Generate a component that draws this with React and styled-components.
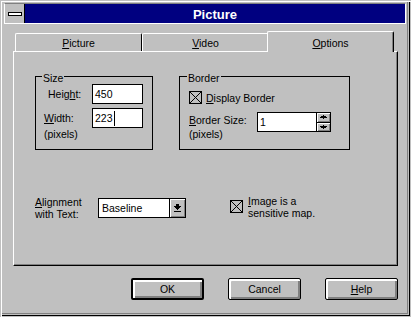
import React from 'react';
import styled, { createGlobalStyle } from 'styled-components';

const Global = createGlobalStyle`
  html, body { margin: 0; padding: 0; background: #c0c0c0; }
  body {
    font-family: "Liberation Sans", Arial, sans-serif;
    font-size: 10.5px;
    color: #000;
  }
  * { box-sizing: border-box; }
`;

const Window = styled.div`
  width: 411px;
  height: 317px;
  background: #c0c0c0;
  display: flex;
  flex-direction: column;
  box-shadow:
    inset 1px 1px 0 #c0c0c0,
    inset 2px 2px 0 #fff,
    inset -1px -1px 0 #c0c0c0,
    inset -2px -2px 0 #000,
    inset -3px -3px 0 #c0c0c0,
    inset -4px -4px 0 #808080;
`;

const TitleBar = styled.div`
  margin: 3px 5px 0 4px;
  height: 21px;
  display: flex;
  border: 1px solid #fff;
  border-top-color: #808080;
`;

const SysBox = styled.div`
  width: 20px;
  border-right: 1px solid #000;
  background: #c0c0c0;
  padding: 8px 0 0 3px;
`;

const SysDash = styled.div`
  width: 14px;
  height: 4px;
  border: 1px solid #000;
  background: #fff;
`;

const Caption = styled.div`
  flex: 1;
  background: #000080;
  color: #fff;
  font-weight: bold;
  font-size: 13px;
  line-height: 19px;
  padding-top: 1px;
  text-align: center;
  overflow: hidden;
`;

const Body = styled.div`
  flex: 1;
  display: flex;
  flex-direction: column;
  padding: 7px 13px 0 13px;
`;

const TabRow = styled.div`
  display: flex;
  align-items: flex-end;
  height: 20px;
  padding-left: 2px;
`;

const Tab = styled.div`
  width: 127px;
  height: ${(p) => (p.$active ? '21px' : '18px')};
  margin: ${(p) => (p.$active ? '0 -2px -1px -2px' : '0')};
  border: 1px solid #fff;
  border-right-color: #000;
  border-bottom: none;
  border-radius: 2px 2px 0 0;
  background: #c0c0c0;
  text-align: center;
  line-height: 17px;
  padding-top: ${(p) => (p.$active ? '3px' : '1px')};
  position: relative;
  z-index: ${(p) => (p.$active ? 2 : 1)};
  box-shadow: ${(p) => (p.$active ? 'inset -1px 0 0 #808080' : 'none')};
`;

const Panel = styled.div`
  height: 215px;
  border: 1px solid #fff;
  border-right-color: #000;
  border-bottom-color: #000;
  box-shadow: inset -1px -1px 0 #808080;
  display: flex;
  flex-direction: column;
  padding: 24px 0 0 21px;
`;

const GroupRow = styled.div`
  display: flex;
  gap: 26px;
`;

const Group = styled.div`
  position: relative;
  width: ${(p) => p.$w}px;
  height: 74px;
  border: 1px solid #000;
  padding: ${(p) => p.$pad};
`;

const Legend = styled.span`
  position: absolute;
  top: -5px;
  left: ${(p) => p.$left}px;
  padding: 0 1px;
  background: #c0c0c0;
  line-height: 12px;
`;

const FieldRow = styled.div`
  display: flex;
  align-items: center;
  height: 20px;
  margin-top: ${(p) => p.$mt || 0}px;
`;

const FieldLabel = styled.span`
  width: ${(p) => p.$w}px;
  padding-left: ${(p) => p.$indent || 0}px;
`;

const Note = styled.div`
  line-height: 12px;
`;

const TextBox = styled.div`
  width: ${(p) => p.$w}px;
  height: 20px;
  background: #fff;
  border: 1px solid #000;
  display: flex;
  align-items: center;
  padding-left: 2px;
`;

const Caret = styled.span`
  display: inline-block;
  width: 1px;
  height: 15px;
  background: #000;
  margin-left: 1px;
`;

const CheckRow = styled.div`
  display: flex;
  align-items: ${(p) => p.$align || 'center'};
  gap: ${(p) => p.$gap}px;
`;

const Box = styled.div`
  width: 13px;
  height: 13px;
  border: 1px solid #000;
  background: #c0c0c0;
  margin-top: ${(p) => p.$mt || 0}px;
  flex: none;
  svg { display: block; }
`;

const SizeRow = styled.div`
  display: flex;
  align-items: flex-start;
  margin-top: 8px;
`;

const TwoLine = styled.div`
  width: ${(p) => p.$w}px;
  line-height: ${(p) => p.$lh}px;
  margin-top: ${(p) => p.$mt || 0}px;
`;

const Spin = styled.div`
  width: 14px;
  height: 20px;
  border: 1px solid #000;
  border-left: none;
  display: flex;
  flex-direction: column;
`;

const SpinButton = styled.div`
  flex: 1;
  background: #c0c0c0;
  box-shadow: inset 1px 1px 0 #fff, inset -1px -1px 0 #808080;
  display: flex;
  align-items: center;
  justify-content: center;
  border-bottom: ${(p) => (p.$top ? '1px solid #000' : 'none')};
  svg { display: block; }
`;

const AlignRow = styled.div`
  display: flex;
  align-items: flex-start;
  margin-top: 46px;
`;

const Select = styled.div`
  width: 88px;
  height: 20px;
  margin-top: 2px;
  border: 1px solid #000;
  background: #fff;
  display: flex;
`;

const SelectText = styled.div`
  flex: 1;
  padding-left: 3px;
  line-height: 18px;
`;

const DropButton = styled.div`
  width: 16px;
  border-left: 1px solid #000;
  background: #c0c0c0;
  box-shadow: inset 1px 1px 0 #fff, inset -1px -1px 0 #808080;
  display: flex;
  align-items: center;
  justify-content: center;
  svg { display: block; }
`;

const MapCheck = styled(CheckRow)`
  margin-left: 44px;
`;

const ButtonRow = styled.div`
  display: flex;
  justify-content: flex-end;
  gap: 24px;
  margin-top: 12px;
`;

const Button = styled.button`
  width: 73px;
  height: 22px;
  padding: 0;
  border: ${(p) => (p.$default ? 2 : 1)}px solid #000;
  border-radius: 2px;
  background: #c0c0c0;
  box-shadow: inset 2px 2px 0 #fff, inset -2px -2px 0 #808080;
  font: inherit;
  color: #000;
  line-height: 18px;
`;

const Check = () => (
  <svg width="11" height="11" viewBox="0 0 11 11">
    <path d="M0 0 L11 11 M11 0 L0 11" stroke="#000" strokeWidth="1" />
  </svg>
);

const UpArrow = () => (
  <svg width="7" height="4" viewBox="0 0 7 4" shapeRendering="crispEdges">
    <rect x="3" y="0" width="1" height="1" fill="#000" />
    <rect x="1" y="1" width="5" height="1" fill="#000" />
    <rect x="0" y="2" width="7" height="1" fill="#000" />
    <rect x="3" y="3" width="1" height="1" fill="#000" />
  </svg>
);

const DownArrow = () => (
  <svg width="7" height="4" viewBox="0 0 7 4" shapeRendering="crispEdges">
    <rect x="3" y="0" width="1" height="1" fill="#000" />
    <rect x="0" y="1" width="7" height="1" fill="#000" />
    <rect x="1" y="2" width="5" height="1" fill="#000" />
    <rect x="3" y="3" width="1" height="1" fill="#000" />
  </svg>
);

const ComboArrow = () => (
  <svg width="7" height="8" viewBox="0 0 7 8" shapeRendering="crispEdges">
    <rect x="2" y="0" width="3" height="2" fill="#000" />
    <rect x="0" y="2" width="7" height="1" fill="#000" />
    <rect x="1" y="3" width="5" height="1" fill="#000" />
    <rect x="2" y="4" width="3" height="1" fill="#000" />
    <rect x="3" y="5" width="1" height="1" fill="#000" />
    <rect x="0" y="7" width="7" height="1" fill="#000" />
  </svg>
);

export default function App() {
  return (
    <>
      <Global />
      <Window>
        <TitleBar>
          <SysBox>
            <SysDash />
          </SysBox>
          <Caption>Picture</Caption>
        </TitleBar>
        <Body>
          <TabRow>
            <Tab><u>P</u>icture</Tab>
            <Tab><u>V</u>ideo</Tab>
            <Tab $active><u>O</u>ptions</Tab>
          </TabRow>
          <Panel>
            <GroupRow>
              <Group $w={118} $pad="7px 0 0 8px">
                <Legend $left={6}>Size</Legend>
                <FieldRow>
                  <FieldLabel $w={48} $indent={4}>Heig<u>h</u>t:</FieldLabel>
                  <TextBox $w={51}>450</TextBox>
                </FieldRow>
                <FieldRow $mt={4}>
                  <FieldLabel $w={48}><u>W</u>idth:</FieldLabel>
                  <TextBox $w={51}>223<Caret /></TextBox>
                </FieldRow>
                <Note>(pixels)</Note>
              </Group>
              <Group $w={171} $pad="14px 0 0 9px">
                <Legend $left={7}>Border</Legend>
                <CheckRow $gap={4}>
                  <Box><Check /></Box>
                  <span><u>D</u>isplay Border</span>
                </CheckRow>
                <SizeRow>
                  <TwoLine $w={68} $lh={14} $mt={1}>
                    <u>B</u>order Size:
                    <br />
                    (pixels)
                  </TwoLine>
                  <TextBox $w={60}>1</TextBox>
                  <Spin>
                    <SpinButton $top><UpArrow /></SpinButton>
                    <SpinButton><DownArrow /></SpinButton>
                  </Spin>
                </SizeRow>
              </Group>
            </GroupRow>
            <AlignRow>
              <TwoLine $w={63} $lh={12}>
                <u>A</u>lignment
                <br />
                with Text:
              </TwoLine>
              <Select>
                <SelectText>Baseline</SelectText>
                <DropButton><ComboArrow /></DropButton>
              </Select>
              <MapCheck $gap={5} $align="flex-start">
                <Box $mt={4}><Check /></Box>
                <TwoLine $lh={12} $mt={-1}>
                  <u>I</u>mage is a
                  <br />
                  sensitive map.
                </TwoLine>
              </MapCheck>
            </AlignRow>
          </Panel>
          <ButtonRow>
            <Button $default>OK</Button>
            <Button>Cancel</Button>
            <Button><u>H</u>elp</Button>
          </ButtonRow>
        </Body>
      </Window>
    </>
  );
}
